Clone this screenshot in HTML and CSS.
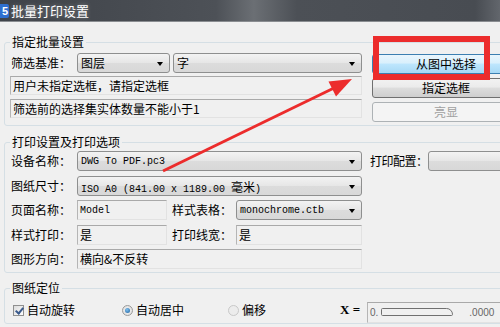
FILE: index.html
```html
<!DOCTYPE html>
<html>
<head>
	<meta charset="utf-8">
	<link rel="stylesheet" href="styles.css">
</head>
<body>
<div class="window">
   <div class="titlebar">
      <span class="app-icon">5</span>
      <span class="title">批量打印设置</span>
   </div>

   <fieldset class="group">
      <legend>指定批量设置</legend>
      <div class="batch">
         <div class="batch-left">
            <div class="filter-row">
               <label>筛选基准：</label>
               <div class="combo layer">图层<i class="caret"></i></div>
               <div class="combo word">字<i class="caret"></i></div>
            </div>
            <div class="field msg">用户未指定选框，请指定选框</div>
            <div class="field msg">筛选前的选择集实体数量不能小于1</div>
         </div>
         <div class="batch-right">
            <button class="btn hot">从图中选择</button>
            <button class="btn">指定选框</button>
            <button class="btn" disabled>亮显</button>
         </div>
      </div>
   </fieldset>

   <fieldset class="group print">
      <legend>打印设置及打印选项</legend>
      <div class="prow">
         <label>设备名称：</label>
         <div class="combo wide mono">DWG To PDF.pc3<i class="caret"></i></div>
         <label class="side">打印配置：</label>
         <div class="combo conf"><i class="caret"></i></div>
      </div>
      <div class="prow">
         <label>图纸尺寸：</label>
         <div class="combo wide mono">ISO A0 (841.00 x 1189.00 <span class="cjk">毫米</span>)<i class="caret"></i></div>
      </div>
      <div class="prow">
         <label>页面名称：</label>
         <div class="field short mono">Model</div>
         <label class="mid">样式表格：</label>
         <div class="combo long mono">monochrome.ctb<i class="caret"></i></div>
      </div>
      <div class="prow">
         <label>样式打印：</label>
         <div class="field short">是</div>
         <label class="mid">打印线宽：</label>
         <div class="field long">是</div>
      </div>
      <div class="prow">
         <label>图形方向：</label>
         <div class="field wide">横向&amp;不反转</div>
      </div>
   </fieldset>

   <fieldset class="group place">
      <legend>图纸定位</legend>
      <div class="place-row">
         <span class="opt rotate"><i class="check"></i>自动旋转</span>
         <span class="opt center"><i class="radio on"></i>自动居中</span>
         <span class="opt offset"><i class="radio"></i>偏移</span>
         <span class="x-label">X =</span>
         <div class="field x-field">0.<i class="bar"></i><span class="zeros">.0000</span></div>
      </div>
   </fieldset>
</div>

<!-- annotation drawn over the dialog -->
<div class="mark-box"></div>
<svg class="arrow" width="500" height="327" viewBox="0 0 500 327">
   <line x1="163" y1="171" x2="334" y2="88" stroke="#ec2c2c" stroke-width="3"/>
   <polygon points="352,79 328.5,81.5 336,96.5" fill="#ec2c2c"/>
</svg>
</body>
</html>
```

FILE: styles.css
```css
body {
   margin: 0;
   width: 500px;
   height: 327px;
   overflow: hidden;
   position: relative;
   background: #f0f0f0;
   font-family: "Noto Sans CJK SC", "Noto Sans", sans-serif;
   font-size: 12px;
   line-height: 14px;
   color: #000;
}

.window {
   width: 540px;
}

.titlebar {
   height: 22px;
   display: flex;
   align-items: center;
   background: linear-gradient(90deg, #3f4349 0%, #4d5157 40%, #6b6f74 47%, #4c5056 55%, #484c52 88%, #70747a 95%, #4a4e54 100%);
   border-bottom: 1px solid #8a8d91;
   box-sizing: border-box;
}

.app-icon {
   width: 9px;
   height: 14px;
   background: #2e6fd0;
   border-radius: 0 2px 2px 0;
   color: #fff;
   font: bold 11px/14px "Liberation Sans", sans-serif;
   text-align: right;
   padding-right: 1px;
   box-sizing: border-box;
}

.title {
   margin-left: 2px;
   font-size: 13px;
   color: #fff;
   text-shadow: 0 0 4px rgba(255, 255, 255, 0.35);
}

.group {
   margin: 12px 0 0 4px;
   padding: 3px 4px 3px 5px;
   border: 1px solid #d5dfe5;
   border-radius: 3px;
   min-width: 0;
}

.group legend {
   padding: 0 2px;
   line-height: 16px;
}

.print {
   margin-top: 8px;
   padding-top: 1px;
}

.place {
   margin-top: 7px;
   padding-top: 4px;
}

label {
   white-space: nowrap;
   flex-shrink: 0;
}

/* first group */
.batch {
   display: flex;
   gap: 10px;
}

.batch-left {
   width: 352px;
   display: flex;
   flex-direction: column;
   gap: 4px;
}

.filter-row {
   display: flex;
   align-items: center;
   height: 20px;
   margin-bottom: -1px;
}

.filter-row label {
   width: 67px;
   padding-left: 1px;
   box-sizing: border-box;
}

.combo {
   height: 20px;
   box-sizing: border-box;
   border: 1px solid #8e8f8f;
   border-radius: 3px;
   background: linear-gradient(#f3f3f3, #e6e6e6 50%, #dcdcdc 51%, #d8d8d8);
   padding: 2px 0 0 3px;
   position: relative;
   white-space: nowrap;
   overflow: hidden;
   flex-shrink: 0;
}

.combo .caret {
   position: absolute;
   right: 6px;
   top: 8px;
   border-left: 3.5px solid transparent;
   border-right: 3.5px solid transparent;
   border-top: 4px solid #000;
}

.layer {
   width: 93px;
}

.word {
   width: 189px;
   margin-left: 3px;
}

.field {
   height: 19px;
   box-sizing: border-box;
   border: 1px solid;
   border-color: #a9a9a9 #e2e2e2 #e2e2e2 #b5b5b5;
   background: #f0f0f0;
   padding: 2px 0 0 2px;
   white-space: nowrap;
   overflow: hidden;
   flex-shrink: 0;
}

.batch-right {
   width: 148px;
   padding-top: 1px;
   display: flex;
   flex-direction: column;
   gap: 4px;
}

.btn {
   height: 20px;
   font: inherit;
   padding: 0;
   border: 1px solid #707070;
   border-radius: 3px;
   background: linear-gradient(#f2f2f2, #ebebeb 45%, #dddddd 50%, #cfcfcf);
   color: #000;
}

.btn.hot {
   border-color: #3c7fb1;
   background: linear-gradient(#eaf6fd, #d9f0fc 45%, #bee6fd 50%, #a7d9f5);
}

.btn:disabled {
   border-color: #adb2b5;
   background: #f4f4f4;
   color: #a0a0a0;
}

/* print settings */
.prow {
   display: flex;
   align-items: center;
   height: 20px;
}

.prow + .prow {
   margin-top: 4.5px;
}

.prow label {
   width: 67px;
   padding-left: 1px;
   box-sizing: border-box;
}

.prow label.mid {
   width: 69px;
   padding-left: 5px;
}

.prow .field {
   height: 20px;
}

.prow .short {
   width: 90px;
}

.prow .long {
   width: 126px;
}

.prow .wide {
   width: 285px;
}

.prow label.side {
   width: 58px;
   margin-left: 8px;
   padding-left: 0;
   letter-spacing: -0.5px;
}

.prow .conf {
   width: 112px;
}

.mono {
   font-family: "Liberation Mono", monospace;
   font-size: 10px;
   padding-top: 3px;
}

.mono .cjk {
   font-family: "Noto Sans CJK SC", sans-serif;
   font-size: 12px;
}

/* paper placement */
.place-row {
   display: flex;
   align-items: center;
   height: 20px;
}

.opt {
   display: flex;
   align-items: center;
   gap: 3px;
}

.rotate {
   margin-left: 3px;
   width: 109px;
}

.center {
   width: 106px;
}

.offset {
   width: 112px;
}

.check {
   width: 11px;
   height: 11px;
   box-sizing: border-box;
   border: 1px solid #8f8f8f;
   background: linear-gradient(135deg, #dcdcdc, #fdfdfd);
   position: relative;
}

.check::after {
   content: "";
   position: absolute;
   left: 2.5px;
   top: 0;
   width: 3px;
   height: 6px;
   border: solid #3a5a8c;
   border-width: 0 2px 2px 0;
   transform: rotate(40deg);
}

.radio {
   width: 11px;
   height: 11px;
   box-sizing: border-box;
   border: 1px solid #9a9a9a;
   border-radius: 50%;
   background: radial-gradient(#f8f8f8, #d8d8d8);
   position: relative;
}

.offset .radio {
   border-color: #c8c8c8;
   background: #ececec;
}

.radio.on::after {
   content: "";
   position: absolute;
   left: 2px;
   top: 2px;
   width: 5px;
   height: 5px;
   border-radius: 50%;
   background: radial-gradient(circle at 40% 35%, #7fc0ee, #1d5f9e);
}

.x-label {
   font: bold 13px "Liberation Serif", serif;
   width: 27px;
}

.x-field {
   flex: 1;
   height: 21px;
   margin-top: 4px;
   display: flex;
   align-items: center;
   padding: 0 0 0 2px;
   font: 10px "Liberation Sans", sans-serif;
   color: #666;
}

.x-field .bar {
   width: 70px;
   height: 6px;
   margin-left: 3px;
   border: 1px solid #707070;
   border-radius: 2px 8px 2px 2px;
}

.x-field .zeros {
   margin-left: 16px;
}

/* red annotation */
.mark-box {
   position: absolute;
   left: 373px;
   top: 36px;
   width: 117px;
   height: 44px;
   box-sizing: border-box;
   border: 6px solid #ec2c2c;
}

.arrow {
   position: absolute;
   left: 0;
   top: 0;
}
```
